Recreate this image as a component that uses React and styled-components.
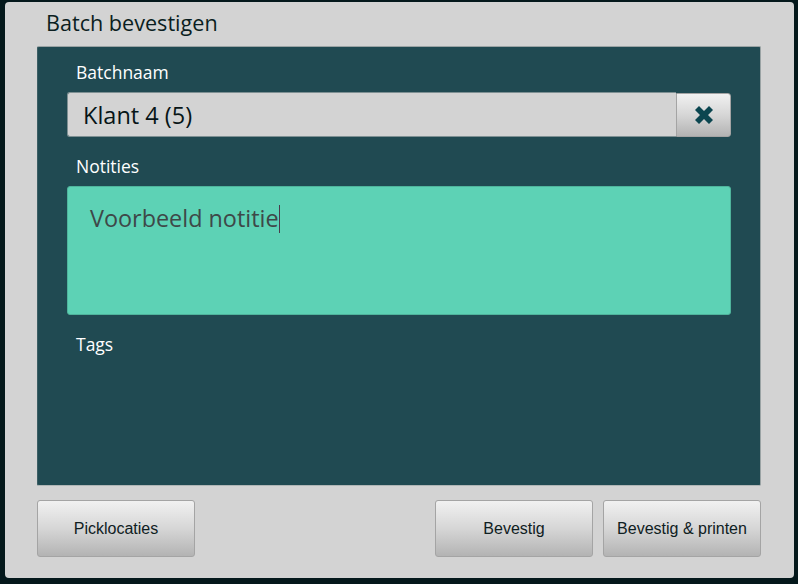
import React from 'react';
import styled, { createGlobalStyle } from 'styled-components';

const GlobalStyle = createGlobalStyle`
    html, body {
        margin: 0;
        padding: 0;
        background: #04181b;
    }
    body {
        font-family: "Open Sans", "Noto Sans", sans-serif;
    }
`;

const buttonFace = `
    background: linear-gradient(to bottom, #f1f1f1 0%, #d6d6d6 50%, #b3b3b3 100%);
    border: 1px solid #a4a4a4;
    color: #0f2022;
    font-family: "Liberation Sans", Arial, sans-serif;
    cursor: pointer;
`;

const Screen = styled.div`
    width: 798px;
    height: 584px;
    padding: 2px 4px 6px 5px;
    box-sizing: border-box;
`;

const Dialog = styled.div`
    height: 100%;
    background: #d3d3d3;
    border-radius: 4px;
    padding: 0 33px 20px 32px;
    box-sizing: border-box;
    display: flex;
    flex-direction: column;
`;

const Title = styled.h1`
    margin: 0;
    height: 44px;
    padding-left: 9px;
    font-size: 21.6px;
    font-weight: 400;
    line-height: 42px;
    color: #0b1e21;
`;

const Panel = styled.div`
    height: 440px;
    background: #204a52;
    border: 1px solid #9aa3a4;
    border-left-color: #3c5e64;
    border-bottom-color: #b0b6b6;
    border-radius: 2px;
    box-sizing: border-box;
    padding: 13px 29px 0 29px;
    display: flex;
    flex-direction: column;
`;

const Label = styled.div`
    color: #ffffff;
    font-size: 17.5px;
    line-height: 24px;
    padding-left: 9px;
    margin-bottom: 8px;
`;

const InputRow = styled.div`
    display: flex;
    height: 45px;
    margin-bottom: 17px;
`;

const TextInput = styled.div`
    flex: 1;
    background: #d3d3d3;
    border: 1px solid #7e9093;
    border-right: none;
    border-radius: 3px 0 0 3px;
    padding-left: 15px;
    font-size: 23.5px;
    line-height: 44px;
    color: #071517;
`;

const ClearButton = styled.button`
    ${buttonFace}
    width: 55px;
    height: 44px;
    margin-top: 1px;
    border-radius: 0 3px 3px 0;
    display: flex;
    align-items: center;
    justify-content: center;
    padding: 0;
`;

const NoteArea = styled.div`
    height: 129px;
    background: #5dd2b5;
    border: 1px solid #4fb49c;
    border-radius: 3px;
    box-sizing: border-box;
    padding: 14px 22px;
    font-size: 23.4px;
    line-height: 34px;
    color: #3e4848;
    margin-bottom: 17px;
`;

const Caret = styled.span`
    display: inline-block;
    width: 1px;
    height: 28px;
    background: #4b3b4b;
    vertical-align: -6px;
`;

const Footer = styled.div`
    display: flex;
    gap: 10px;
    margin-top: 14px;
`;

const ActionButton = styled.button`
    ${buttonFace}
    width: 158px;
    height: 57px;
    border-radius: 3px;
    font-size: 16px;
    margin-right: ${p => (p.$push ? 'auto' : '0')};
`;

const CrossIcon = () => (
    <svg width="20" height="20" viewBox="0 0 20 20">
        <path
            d="M1 5 L5 1 L10 6 L15 1 L19 5 L14 10 L19 15 L15 19 L10 14 L5 19 L1 15 L6 10 Z"
            fill="#0b4650"
        />
    </svg>
);

const App = () => {
    return (
        <>
            <GlobalStyle />
            <Screen>
                <Dialog>
                    <Title>Batch bevestigen</Title>
                    <Panel>
                        <Label>Batchnaam</Label>
                        <InputRow>
                            <TextInput>Klant 4 (5)</TextInput>
                            <ClearButton><CrossIcon /></ClearButton>
                        </InputRow>
                        <Label>Notities</Label>
                        <NoteArea>Voorbeeld notitie<Caret /></NoteArea>
                        <Label>Tags</Label>
                    </Panel>
                    <Footer>
                        <ActionButton $push>Picklocaties</ActionButton>
                        <ActionButton>Bevestig</ActionButton>
                        <ActionButton>Bevestig &amp; printen</ActionButton>
                    </Footer>
                </Dialog>
            </Screen>
        </>
    );
};

export default App;
